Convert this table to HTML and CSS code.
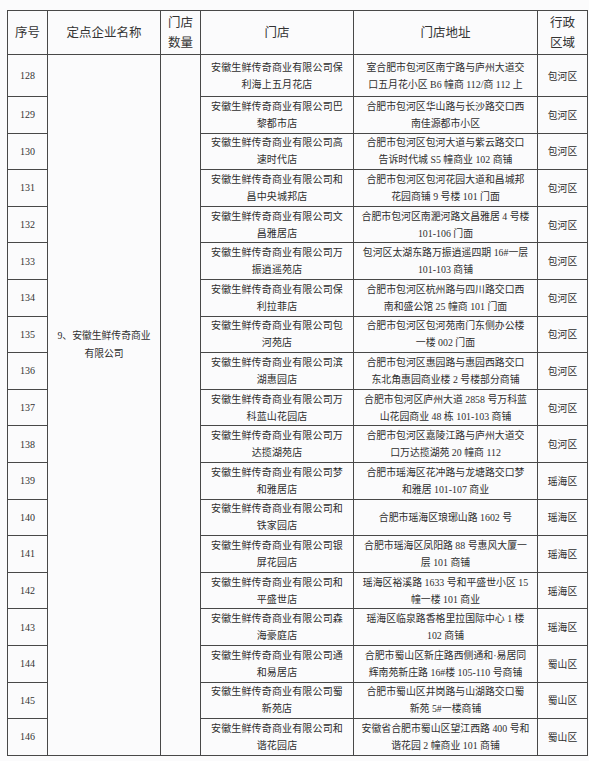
FILE: index.html
```html
<!DOCTYPE html>
<html lang="zh-CN">
<head>
<meta charset="utf-8">
<title>定点企业门店表</title>
<link rel="stylesheet" href="styles.css">
</head>
<body>
<table class="sheet">
  <colgroup>
    <col class="c-no"><col class="c-name"><col class="c-count"><col class="c-store"><col class="c-addr"><col class="c-area">
  </colgroup>
  <thead>
    <tr class="head">
      <th>序号</th>
      <th>定点企业名称</th>
      <th>门店<br>数量</th>
      <th>门店</th>
      <th>门店地址</th>
      <th>行政<br>区域</th>
    </tr>
  </thead>
  <tbody>
    <tr class="first">
      <td class="no">128</td>
      <td class="corp" rowspan="19"><div>9、安徽生鲜传奇商业<br>有限公司</div></td>
      <td rowspan="19"></td>
      <td class="store">安徽生鲜传奇商业有限公司保<br>利海上五月花店</td>
      <td class="addr">室合肥市包河区南宁路与庐州大道交<br>口五月花小区 B6 幢商 112/商 112 上</td>
      <td class="area">包河区</td>
    </tr>
    <tr><td class="no">129</td><td class="store">安徽生鲜传奇商业有限公司巴<br>黎都市店</td><td class="addr">合肥市包河区华山路与长沙路交口西<br>南佳源都市小区</td><td class="area">包河区</td></tr>
    <tr><td class="no">130</td><td class="store">安徽生鲜传奇商业有限公司高<br>速时代店</td><td class="addr">合肥市包河区包河大道与紫云路交口<br>告诉时代城 S5 幢商业 102 商铺</td><td class="area">包河区</td></tr>
    <tr><td class="no">131</td><td class="store">安徽生鲜传奇商业有限公司和<br>昌中央城邦店</td><td class="addr">合肥市包河区包河花园大道和昌城邦<br>花园商铺 9 号楼 101 门面</td><td class="area">包河区</td></tr>
    <tr><td class="no">132</td><td class="store">安徽生鲜传奇商业有限公司文<br>昌雅居店</td><td class="addr">合肥市包河区南淝河路文昌雅居 4 号楼<br>101-106 门面</td><td class="area">包河区</td></tr>
    <tr><td class="no">133</td><td class="store">安徽生鲜传奇商业有限公司万<br>振逍遥苑店</td><td class="addr">包河区太湖东路万振逍遥四期 16#一层<br>101-103 商铺</td><td class="area">包河区</td></tr>
    <tr><td class="no">134</td><td class="store">安徽生鲜传奇商业有限公司保<br>利拉菲店</td><td class="addr">合肥市包河区杭州路与四川路交口西<br>南和盛公馆 25 幢商 101 门面</td><td class="area">包河区</td></tr>
    <tr><td class="no">135</td><td class="store">安徽生鲜传奇商业有限公司包<br>河苑店</td><td class="addr">合肥市包河区包河苑南门东侧办公楼<br>一楼 002 门面</td><td class="area">包河区</td></tr>
    <tr><td class="no">136</td><td class="store">安徽生鲜传奇商业有限公司滨<br>湖惠园店</td><td class="addr">合肥市包河区惠园路与惠园西路交口<br>东北角惠园商业楼 2 号楼部分商铺</td><td class="area">包河区</td></tr>
    <tr><td class="no">137</td><td class="store">安徽生鲜传奇商业有限公司万<br>科蓝山花园店</td><td class="addr">合肥市包河区庐州大道 2858 号万科蓝<br>山花园商业 48 栋 101-103 商铺</td><td class="area">包河区</td></tr>
    <tr><td class="no">138</td><td class="store">安徽生鲜传奇商业有限公司万<br>达揽湖苑店</td><td class="addr">合肥市包河区嘉陵江路与庐州大道交<br>口万达揽湖苑 20 幢商 112</td><td class="area">包河区</td></tr>
    <tr><td class="no">139</td><td class="store">安徽生鲜传奇商业有限公司梦<br>和雅居店</td><td class="addr">合肥市瑶海区花冲路与龙塘路交口梦<br>和雅居 101-107 商业</td><td class="area">瑶海区</td></tr>
    <tr><td class="no">140</td><td class="store">安徽生鲜传奇商业有限公司和<br>铁家园店</td><td class="addr">合肥市瑶海区琅琊山路 1602 号</td><td class="area">瑶海区</td></tr>
    <tr><td class="no">141</td><td class="store">安徽生鲜传奇商业有限公司银<br>屏花园店</td><td class="addr">合肥市瑶海区凤阳路 88 号惠风大厦一<br>层 101 商铺</td><td class="area">瑶海区</td></tr>
    <tr><td class="no">142</td><td class="store">安徽生鲜传奇商业有限公司和<br>平盛世店</td><td class="addr">瑶海区裕溪路 1633 号和平盛世小区 15<br>幢一楼 101 商业</td><td class="area">瑶海区</td></tr>
    <tr><td class="no">143</td><td class="store">安徽生鲜传奇商业有限公司森<br>海豪庭店</td><td class="addr">瑶海区临泉路香格里拉国际中心 1 楼<br>102 商铺</td><td class="area">瑶海区</td></tr>
    <tr><td class="no">144</td><td class="store">安徽生鲜传奇商业有限公司通<br>和易居店</td><td class="addr">合肥市蜀山区新庄路西侧通和·易居同<br>辉南苑新庄路 16#楼 105-110 号商铺</td><td class="area">蜀山区</td></tr>
    <tr><td class="no">145</td><td class="store">安徽生鲜传奇商业有限公司蜀<br>新苑店</td><td class="addr">合肥市蜀山区井岗路与山湖路交口蜀<br>新苑 5#一楼商铺</td><td class="area">蜀山区</td></tr>
    <tr><td class="no">146</td><td class="store">安徽生鲜传奇商业有限公司和<br>谐花园店</td><td class="addr">安徽省合肥市蜀山区望江西路 400 号和<br>谐花园 2 幢商业 101 商铺</td><td class="area">蜀山区</td></tr>
  </tbody>
</table>
</body>
</html>
```
FILE: styles.css
```css
html, body {
  margin: 0;
  padding: 0;
  background: #fbfbfc;
}

body {
  padding: 10px 0 0 7px;
  font-family: "Liberation Serif", "Noto Sans CJK SC", serif;
  color: #2e2e2e;
}

.sheet {
  border-collapse: collapse;
  table-layout: fixed;
  width: 580px;
}

.c-no { width: 40px; }
.c-name { width: 113px; }
.c-count { width: 40px; }
.c-store { width: 153px; }
.c-addr { width: 184px; }
.c-area { width: 50px; }

.sheet th,
.sheet td {
  border: 1px solid #484848;
  padding: 0;
  text-align: center;
  vertical-align: middle;
  white-space: nowrap;
  overflow: hidden;
}

.head {
  height: 44px;
}

.head th {
  font-weight: normal;
  font-size: 12.5px;
  line-height: 20px;
  color: #333;
}

tbody tr {
  height: 36.6px;
}

tbody tr.first {
  height: 42px;
}

.no {
  font-size: 10px;
  color: #333;
}

.store {
  font-size: 10px;
  line-height: 17px;
  letter-spacing: 0.15px;
}

.addr {
  font-size: 9.9px;
  line-height: 17px;
}

.area {
  font-size: 9.8px;
}

.sheet td.corp {
  vertical-align: top;
  font-size: 9.8px;
  line-height: 18px;
}

.corp div {
  padding-top: 272px;
}
```
